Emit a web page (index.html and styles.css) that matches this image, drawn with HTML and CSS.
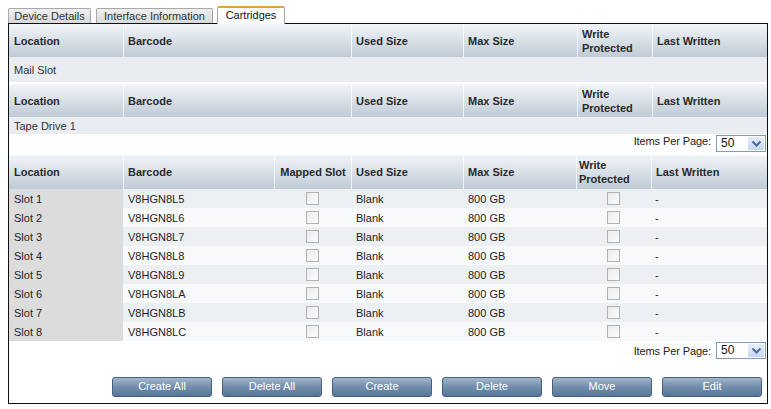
FILE: index.html
```html
<!DOCTYPE html>
<html>
<head>
<meta charset="utf-8">
<link rel="stylesheet" href="styles.css">
</head>
<body>
<div class="tabs">
  <div class="tab tab-1">Device Details</div>
  <div class="tab tab-2">Interface Information</div>
  <div class="tab tab-3 active">Cartridges</div>
</div>
<div class="panel">
  <table class="grid grid-a">
    <colgroup><col class="c114"><col class="c228"><col class="c112"><col class="c114"><col class="c75"><col class="c115"></colgroup>
    <thead><tr><th>Location</th><th>Barcode</th><th>Used Size</th><th>Max Size</th><th>Write<br>Protected</th><th>Last Written</th></tr></thead>
    <tbody><tr class="group-row mail"><td colspan="6">Mail Slot</td></tr></tbody>
  </table>
  <table class="grid grid-a grid-b">
    <colgroup><col class="c114"><col class="c228"><col class="c112"><col class="c114"><col class="c75"><col class="c115"></colgroup>
    <thead><tr><th>Location</th><th>Barcode</th><th>Used Size</th><th>Max Size</th><th>Write<br>Protected</th><th>Last Written</th></tr></thead>
    <tbody><tr class="group-row tape"><td colspan="6">Tape Drive 1</td></tr></tbody>
  </table>
  <div class="pager pager-top">
    <span class="pager-label">Items Per Page:</span>
    <div class="select"><span class="select-value">50</span><span class="select-btn"><svg width="11" height="8" viewBox="0 0 11 8"><path d="M1.5 1.5 L5.5 5.5 L9.5 1.5" fill="none" stroke="#4d6a9c" stroke-width="2"/></svg></span></div>
  </div>
  <table class="grid grid-c">
    <colgroup><col class="c114"><col class="c151"><col class="c77"><col class="c112"><col class="c113"><col class="c75"><col class="c116"></colgroup>
    <thead><tr><th>Location</th><th>Barcode</th><th class="center">Mapped Slot</th><th>Used Size</th><th>Max Size</th><th class="wp">Write<br>Protected</th><th>Last Written</th></tr></thead>
    <tbody>
      <tr class="odd"><td class="loc">Slot 1</td><td>V8HGN8L5</td><td class="center"><span class="cb"></span></td><td>Blank</td><td>800 GB</td><td class="center"><span class="cb"></span></td><td class="last">-</td></tr>
      <tr class="even"><td class="loc">Slot 2</td><td>V8HGN8L6</td><td class="center"><span class="cb"></span></td><td>Blank</td><td>800 GB</td><td class="center"><span class="cb"></span></td><td class="last">-</td></tr>
      <tr class="odd"><td class="loc">Slot 3</td><td>V8HGN8L7</td><td class="center"><span class="cb"></span></td><td>Blank</td><td>800 GB</td><td class="center"><span class="cb"></span></td><td class="last">-</td></tr>
      <tr class="even"><td class="loc">Slot 4</td><td>V8HGN8L8</td><td class="center"><span class="cb"></span></td><td>Blank</td><td>800 GB</td><td class="center"><span class="cb"></span></td><td class="last">-</td></tr>
      <tr class="odd"><td class="loc">Slot 5</td><td>V8HGN8L9</td><td class="center"><span class="cb"></span></td><td>Blank</td><td>800 GB</td><td class="center"><span class="cb"></span></td><td class="last">-</td></tr>
      <tr class="even"><td class="loc">Slot 6</td><td>V8HGN8LA</td><td class="center"><span class="cb"></span></td><td>Blank</td><td>800 GB</td><td class="center"><span class="cb"></span></td><td class="last">-</td></tr>
      <tr class="odd"><td class="loc">Slot 7</td><td>V8HGN8LB</td><td class="center"><span class="cb"></span></td><td>Blank</td><td>800 GB</td><td class="center"><span class="cb"></span></td><td class="last">-</td></tr>
      <tr class="even"><td class="loc">Slot 8</td><td>V8HGN8LC</td><td class="center"><span class="cb"></span></td><td>Blank</td><td>800 GB</td><td class="center"><span class="cb"></span></td><td class="last">-</td></tr>
    </tbody>
  </table>
  <div class="pager pager-bottom">
    <span class="pager-label">Items Per Page:</span>
    <div class="select"><span class="select-value">50</span><span class="select-btn"><svg width="11" height="8" viewBox="0 0 11 8"><path d="M1.5 1.5 L5.5 5.5 L9.5 1.5" fill="none" stroke="#4d6a9c" stroke-width="2"/></svg></span></div>
  </div>
  <div class="actions">
    <button class="btn">Create All</button>
    <button class="btn">Delete All</button>
    <button class="btn">Create</button>
    <button class="btn">Delete</button>
    <button class="btn">Move</button>
    <button class="btn">Edit</button>
  </div>
</div>
</body>
</html>
```
FILE: styles.css
```css
html, body {
  margin: 0;
  padding: 0;
  background: #fff;
}
body {
  padding: 6px 0 0 8px;
  font-family: "Liberation Sans", Arial, sans-serif;
  font-size: 11px;
  color: #1e1e1e;
}
.tabs {
  display: flex;
  align-items: flex-end;
  height: 17px;
  position: relative;
  z-index: 2;
}
.tab {
  box-sizing: border-box;
  height: 15px;
  border: 1px solid #a8a8a8;
  border-bottom: none;
  background: linear-gradient(#f0f0f0, #d9d9d9);
  color: #333;
  text-align: center;
  line-height: 14px;
  font-size: 11px;
  border-radius: 2px 2px 0 0;
}
.tab-1 { width: 83px; }
.tab-2 { width: 117px; margin-left: 5px; }
.tab-3 { width: 68px; margin-left: 4px; }
.tab.active {
  height: 18px;
  margin-bottom: -1px;
  background: #fff;
  border-top: 2px solid #e2a23c;
  color: #111;
  line-height: 15px;
}
.panel {
  width: 758px;
  height: 379px;
  border: 1px solid #111;
  display: flex;
  flex-direction: column;
}
.grid {
  width: 758px;
  border-collapse: separate;
  border-spacing: 0;
  table-layout: fixed;
}
.c114 { width: 114px; }
.c228 { width: 228px; }
.c112 { width: 112px; }
.c75 { width: 75px; }
.c115 { width: 115px; }
.c151 { width: 151px; }
.c77 { width: 77px; }
.c113 { width: 113px; }
.c116 { width: 116px; }
.grid th {
  height: 33px;
  padding: 0 0 0 5px;
  text-align: left;
  font-weight: bold;
  font-size: 11px;
  line-height: 14px;
  color: #2a2a2a;
  background: linear-gradient(#f2f5f8, #dbe2e9 45%, #c0cbd6);
  white-space: nowrap;
}
.grid th + th {
  box-shadow: inset 1px 0 0 rgba(255, 255, 255, 0.75);
}
.grid th.center { text-align: center; padding: 0 0 0 1px; }
.grid th.wp { padding-left: 3px; }
.grid-b { margin-top: 2px; }
.grid-c th { height: 34px; }
.grid td {
  padding: 0 0 0 5px;
  white-space: nowrap;
}
.group-row td {
  background: #e9edf1;
  color: #333;
}
.mail td { height: 25px; }
.tape td { height: 17px; }
.grid-c td { height: 19px; }
.grid-c tr.odd td { background: #edf0f3; }
.grid-c tr.even td { background: #f8f9fa; }
.grid-c tr td.loc { background: #dcdcdc; }
.grid td.center { padding: 0; text-align: center; }
.grid td.last { padding-left: 4px; }
.cb {
  display: inline-block;
  box-sizing: border-box;
  width: 13px;
  height: 13px;
  border: 1px solid #b2b2b2;
  background: linear-gradient(135deg, #ececec, #fbfbfb);
  vertical-align: middle;
}
.pager {
  display: flex;
  justify-content: flex-end;
  align-items: center;
  gap: 5px;
  padding-right: 1px;
}
.pager-top { height: 21px; padding-bottom: 1px; align-items: flex-start; padding-top: 1px; box-sizing: border-box; }
.pager-bottom { height: 19px; align-items: center; }
.pager-label { color: #222; letter-spacing: -0.1px; }
.select {
  box-sizing: border-box;
  width: 50px;
  height: 17px;
  border: 1px solid #7f9db9;
  background: #fff;
  display: flex;
  align-items: stretch;
}
.select-value {
  flex: 1;
  padding-left: 4px;
  line-height: 15px;
  font-size: 12px;
  color: #111;
}
.select-btn {
  width: 16px;
  margin: 1px;
  background: linear-gradient(#e6eefc, #c5d6f5);
  display: flex;
  align-items: center;
  justify-content: center;
}
.actions {
  display: flex;
  justify-content: flex-end;
  gap: 10px;
  padding: 17px 5px 0 0;
}
.btn {
  box-sizing: border-box;
  width: 100px;
  height: 20px;
  padding: 0 0 3px;
  border: 1px solid #44607f;
  border-radius: 3px;
  background: linear-gradient(#a3b6cb, #7690ae 45%, #58769a);
  color: #fff;
  font-family: "Liberation Sans", Arial, sans-serif;
  font-size: 11px;
  line-height: 14px;
}
```
